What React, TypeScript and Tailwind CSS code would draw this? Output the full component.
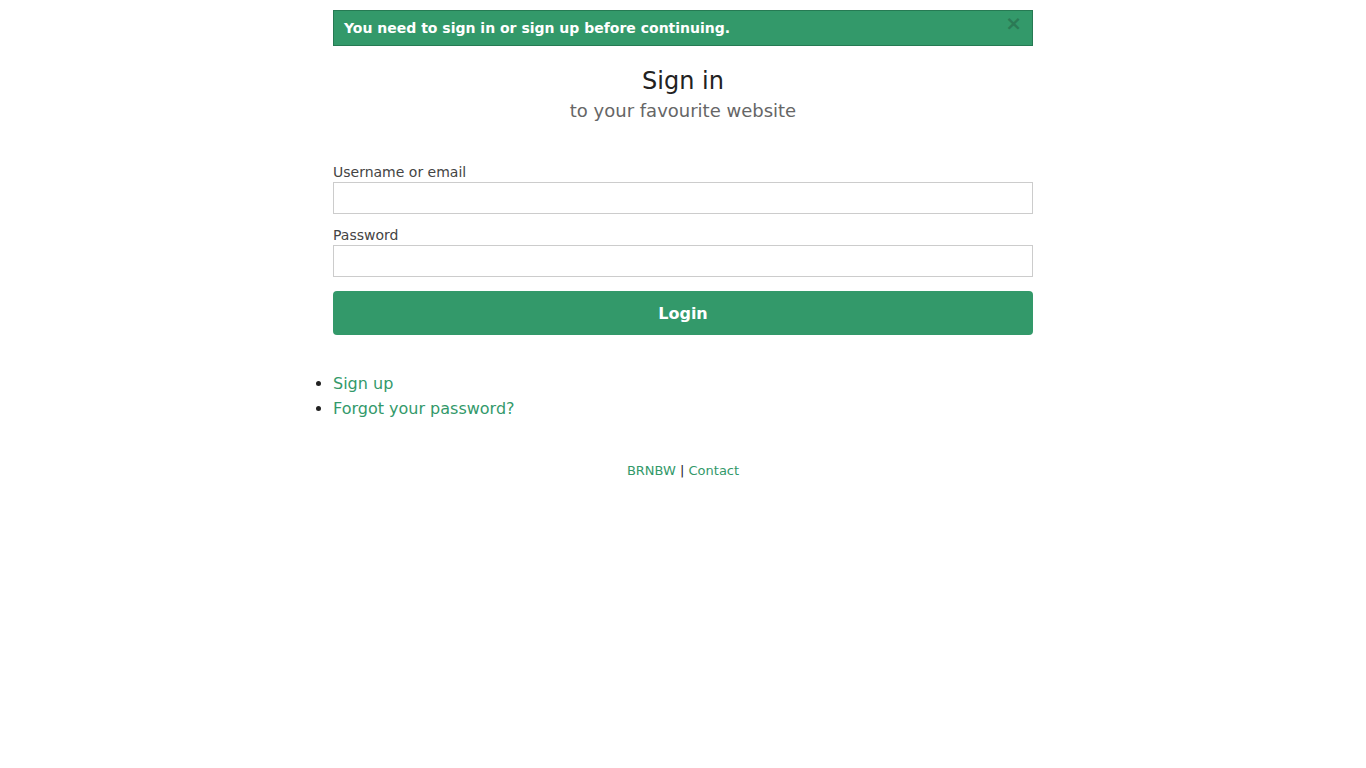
export default function App() {
  return (
    <div className="min-h-[768px] bg-white font-['DejaVu_Sans',sans-serif] text-[#222]">
      <div className="mx-auto w-[700px] pt-[10px]">
        {/* flash */}
        <div className="relative h-[36px] border border-[#267a53] bg-[#33996a] px-[10px] text-[14px] font-bold leading-[34px] text-white">
          You need to sign in or sign up before continuing.
          <button className="absolute right-[10px] top-[-1px] text-[20px] font-bold leading-[26px] text-[#2b7a55]">
            ×
          </button>
        </div>

        <h1 className="mt-[20px] text-center text-[24px] leading-[30px] text-[#222]">Sign in</h1>
        <p className="mt-[3px] text-center text-[18px] leading-[24px] text-[#666]">to your favourite website</p>

        <form className="mt-[38px] flex flex-col">
          <label className="pt-[1px] text-[14px] leading-[20px] text-[#444]">Username or email</label>
          <input type="text" className="h-[32px] border border-[#ccc] px-2 outline-none" />
          <label className="mt-[10px] pt-[1px] text-[14px] leading-[20px] text-[#444]">Password</label>
          <input type="password" className="h-[32px] border border-[#ccc] px-2 outline-none" />
          <button
            type="button"
            className="mt-[14px] h-[44px] rounded-[4px] bg-[#33996a] pt-[2px] text-[16px] font-bold text-white"
          >
            Login
          </button>
        </form>

        <ul className="mt-[36px] list-outside list-disc pl-0 text-[16px] leading-[25px]">
          <li>
            <a className="text-[#33996a]" href="#">Sign up</a>
          </li>
          <li>
            <a className="text-[#33996a]" href="#">Forgot your password?</a>
          </li>
        </ul>

        <footer className="mt-[41px] text-center text-[13px] leading-[18px] text-[#222]">
          <a className="text-[#33996a]" href="#">BRNBW</a> | <a className="text-[#33996a]" href="#">Contact</a>
        </footer>
      </div>
    </div>
  );
}
